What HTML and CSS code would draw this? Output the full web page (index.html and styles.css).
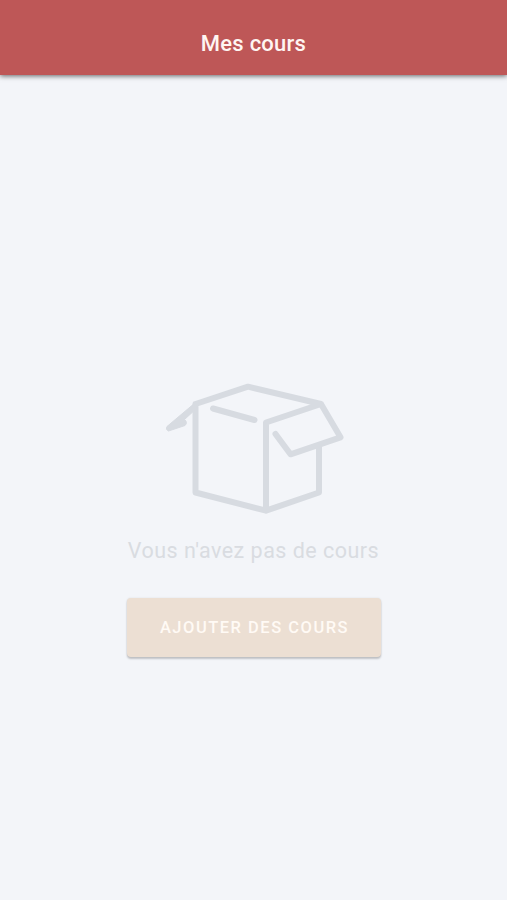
FILE: index.html
```html
<!DOCTYPE html>
<html lang="fr">
<head>
<meta charset="utf-8">
<meta name="viewport" content="width=device-width, initial-scale=1">
<title>Mes cours</title>
<link rel="stylesheet" href="styles.css">
</head>
<body>
<header class="app-bar"><h1 class="app-title">Mes cours</h1></header>
<main class="empty-state">
<svg class="box-icon" viewBox="0 0 180 132" aria-hidden="true">
<path d="M31.500 22 84 4.700 157 22M31.500 22V110.500L102 128.700 155 110.500V65M102 128.700V40.500L157 22 176.500 55.300 126.500 72.300 111.500 52M49 26.500 90.500 38"/>
<path class="flap" d="M31.500 20.500 3 44.500Q1 47.500 4.500 49L21 43.500Q24 40.500 20.500 37.500L33 26Z"/>
</svg>
<p class="empty-text">Vous n'avez pas de cours</p>
<button class="add-button" type="button">AJOUTER DES COURS</button>
</main>
</body>
</html>
```
FILE: styles.css
```css
* { box-sizing: border-box; }
body {
  margin: 0;
  min-height: 100vh;
  display: flex;
  flex-direction: column;
  background: #f3f5f9;
  font-family: Roboto, "Liberation Sans", sans-serif;
}
.app-bar {
  height: 75px;
  padding-top: 12px;
  display: flex;
  align-items: center;
  justify-content: center;
  background: #be5757;
  box-shadow: 0 1px 5px rgba(0, 0, 0, .6);
}
.app-title {
  margin: 0;
  color: #fff5f2;
  font-size: 22px;
  font-weight: 500;
  line-height: 28px;
  letter-spacing: .25px;
}
.empty-state {
  display: flex;
  flex-direction: column;
  align-items: center;
  padding-top: 307px;
}
.box-icon {
  display: block;
  width: 180px;
  height: 132px;
  fill: none;
  stroke: #d7dbe1;
  stroke-width: 6;
  stroke-linecap: round;
  stroke-linejoin: round;
}
.flap {
  fill: #d7dbe1;
  stroke-width: 1;
}
.empty-text {
  margin: 23px 0 0;
  color: #d9dce1;
  font-size: 21.500px;
  line-height: 28px;
  letter-spacing: .48px;
}
.add-button {
  width: 254px;
  height: 59px;
  margin-top: 33px;
  padding: 1px 0 0 2px;
  border: 0;
  border-radius: 4px;
  background: #ecdfd3;
  box-shadow: 0 2px 2px rgba(0, 0, 0, .2), 0 0 2px rgba(0, 0, 0, .1);
  color: #fffaf5;
  font: 500 16.500px/24px Roboto, "Liberation Sans", sans-serif;
  letter-spacing: 1.500px;
}
```
